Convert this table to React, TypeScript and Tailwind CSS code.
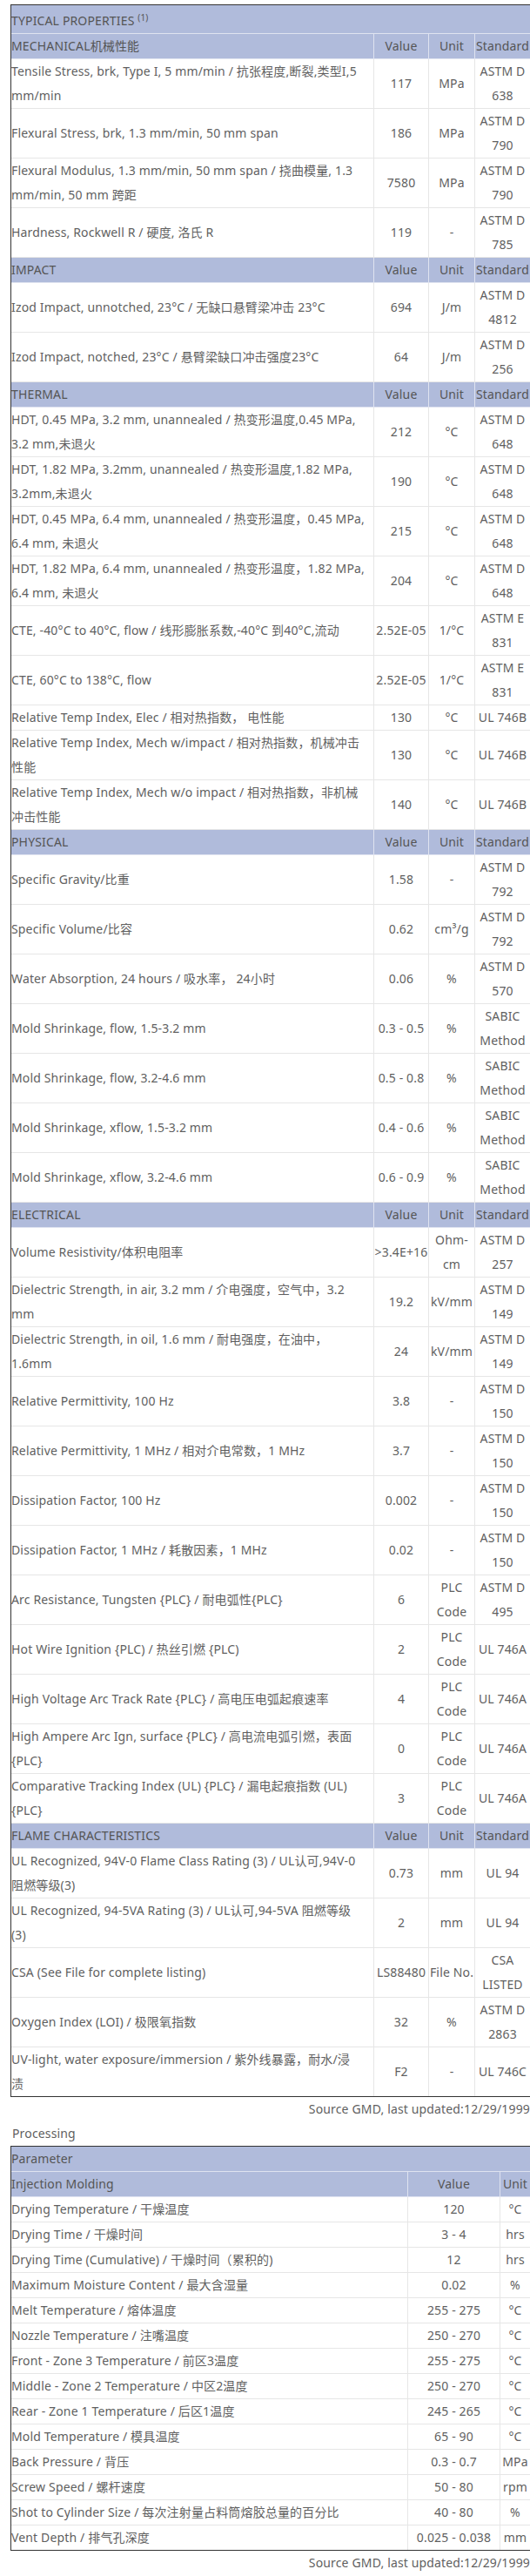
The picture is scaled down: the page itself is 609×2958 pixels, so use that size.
import React from 'react';

interface PropRow {
    name: string;
    value: string;
    unit: string;
    std: string;
}

interface Section {
    title: string;
    rows: PropRow[];
}

interface ProcRow {
    name: string;
    value: string;
    unit: string;
}

const sections: Section[] = [
    {
        title: 'MECHANICAL机械性能',
        rows: [
            { name: 'Tensile Stress, brk, Type I, 5 mm/min / 抗张程度,断裂,类型I,5\nmm/min', value: '117', unit: 'MPa', std: 'ASTM D\n638' },
            { name: 'Flexural Stress, brk, 1.3 mm/min, 50 mm span', value: '186', unit: 'MPa', std: 'ASTM D\n790' },
            { name: 'Flexural Modulus, 1.3 mm/min, 50 mm span / 挠曲模量, 1.3\nmm/min, 50 mm 跨距', value: '7580', unit: 'MPa', std: 'ASTM D\n790' },
            { name: 'Hardness, Rockwell R / 硬度, 洛氏 R', value: '119', unit: '-', std: 'ASTM D\n785' },
        ],
    },
    {
        title: 'IMPACT',
        rows: [
            { name: 'Izod Impact, unnotched, 23°C / 无缺口悬臂梁冲击 23°C', value: '694', unit: 'J/m', std: 'ASTM D\n4812' },
            { name: 'Izod Impact, notched, 23°C / 悬臂梁缺口冲击强度23°C', value: '64', unit: 'J/m', std: 'ASTM D\n256' },
        ],
    },
    {
        title: 'THERMAL',
        rows: [
            { name: 'HDT, 0.45 MPa, 3.2 mm, unannealed / 热变形温度,0.45 MPa,\n3.2 mm,未退火', value: '212', unit: '°C', std: 'ASTM D\n648' },
            { name: 'HDT, 1.82 MPa, 3.2mm, unannealed / 热变形温度,1.82 MPa,\n3.2mm,未退火', value: '190', unit: '°C', std: 'ASTM D\n648' },
            { name: 'HDT, 0.45 MPa, 6.4 mm, unannealed / 热变形温度，0.45 MPa,\n6.4 mm, 未退火', value: '215', unit: '°C', std: 'ASTM D\n648' },
            { name: 'HDT, 1.82 MPa, 6.4 mm, unannealed / 热变形温度，1.82 MPa,\n6.4 mm, 未退火', value: '204', unit: '°C', std: 'ASTM D\n648' },
            { name: 'CTE, -40°C to 40°C, flow / 线形膨胀系数,-40°C 到40°C,流动', value: '2.52E-05', unit: '1/°C', std: 'ASTM E\n831' },
            { name: 'CTE, 60°C to 138°C, flow', value: '2.52E-05', unit: '1/°C', std: 'ASTM E\n831' },
            { name: 'Relative Temp Index, Elec / 相对热指数， 电性能', value: '130', unit: '°C', std: 'UL 746B' },
            { name: 'Relative Temp Index, Mech w/impact / 相对热指数，机械冲击\n性能', value: '130', unit: '°C', std: 'UL 746B' },
            { name: 'Relative Temp Index, Mech w/o impact / 相对热指数，非机械\n冲击性能', value: '140', unit: '°C', std: 'UL 746B' },
        ],
    },
    {
        title: 'PHYSICAL',
        rows: [
            { name: 'Specific Gravity/比重', value: '1.58', unit: '-', std: 'ASTM D\n792' },
            { name: 'Specific Volume/比容', value: '0.62', unit: 'cm³/g', std: 'ASTM D\n792' },
            { name: 'Water Absorption, 24 hours / 吸水率， 24小时', value: '0.06', unit: '%', std: 'ASTM D\n570' },
            { name: 'Mold Shrinkage, flow, 1.5-3.2 mm', value: '0.3 - 0.5', unit: '%', std: 'SABIC\nMethod' },
            { name: 'Mold Shrinkage, flow, 3.2-4.6 mm', value: '0.5 - 0.8', unit: '%', std: 'SABIC\nMethod' },
            { name: 'Mold Shrinkage, xflow, 1.5-3.2 mm', value: '0.4 - 0.6', unit: '%', std: 'SABIC\nMethod' },
            { name: 'Mold Shrinkage, xflow, 3.2-4.6 mm', value: '0.6 - 0.9', unit: '%', std: 'SABIC\nMethod' },
        ],
    },
    {
        title: 'ELECTRICAL',
        rows: [
            { name: 'Volume Resistivity/体积电阻率', value: '>3.4E+16', unit: 'Ohm-\ncm', std: 'ASTM D\n257' },
            { name: 'Dielectric Strength, in air, 3.2 mm / 介电强度，空气中，3.2\nmm', value: '19.2', unit: 'kV/mm', std: 'ASTM D\n149' },
            { name: 'Dielectric Strength, in oil, 1.6 mm / 耐电强度，在油中，\n1.6mm', value: '24', unit: 'kV/mm', std: 'ASTM D\n149' },
            { name: 'Relative Permittivity, 100 Hz', value: '3.8', unit: '-', std: 'ASTM D\n150' },
            { name: 'Relative Permittivity, 1 MHz / 相对介电常数，1 MHz', value: '3.7', unit: '-', std: 'ASTM D\n150' },
            { name: 'Dissipation Factor, 100 Hz', value: '0.002', unit: '-', std: 'ASTM D\n150' },
            { name: 'Dissipation Factor, 1 MHz / 耗散因素，1 MHz', value: '0.02', unit: '-', std: 'ASTM D\n150' },
            { name: 'Arc Resistance, Tungsten {PLC} / 耐电弧性{PLC}', value: '6', unit: 'PLC\nCode', std: 'ASTM D\n495' },
            { name: 'Hot Wire Ignition {PLC) / 热丝引燃 {PLC)', value: '2', unit: 'PLC\nCode', std: 'UL 746A' },
            { name: 'High Voltage Arc Track Rate {PLC} / 高电压电弧起痕速率', value: '4', unit: 'PLC\nCode', std: 'UL 746A' },
            { name: 'High Ampere Arc Ign, surface {PLC} / 高电流电弧引燃，表面\n{PLC}', value: '0', unit: 'PLC\nCode', std: 'UL 746A' },
            { name: 'Comparative Tracking Index (UL) {PLC} / 漏电起痕指数 (UL)\n{PLC}', value: '3', unit: 'PLC\nCode', std: 'UL 746A' },
        ],
    },
    {
        title: 'FLAME CHARACTERISTICS',
        rows: [
            { name: 'UL Recognized, 94V-0 Flame Class Rating (3) / UL认可,94V-0\n阻燃等级(3)', value: '0.73', unit: 'mm', std: 'UL 94' },
            { name: 'UL Recognized, 94-5VA Rating (3) / UL认可,94-5VA 阻燃等级\n(3)', value: '2', unit: 'mm', std: 'UL 94' },
            { name: 'CSA (See File for complete listing)', value: 'LS88480', unit: 'File No.', std: 'CSA\nLISTED' },
            { name: 'Oxygen Index (LOI) / 极限氧指数', value: '32', unit: '%', std: 'ASTM D\n2863' },
            { name: 'UV-light, water exposure/immersion / 紫外线暴露，耐水/浸\n渍', value: 'F2', unit: '-', std: 'UL 746C' },
        ],
    },
];

const processing: ProcRow[] = [
    { name: 'Drying Temperature / 干燥温度', value: '120', unit: '°C' },
    { name: 'Drying Time / 干燥时间', value: '3 - 4', unit: 'hrs' },
    { name: 'Drying Time (Cumulative) / 干燥时间（累积的)', value: '12', unit: 'hrs' },
    { name: 'Maximum Moisture Content / 最大含湿量', value: '0.02', unit: '%' },
    { name: 'Melt Temperature / 熔体温度', value: '255 - 275', unit: '°C' },
    { name: 'Nozzle Temperature / 注嘴温度', value: '250 - 270', unit: '°C' },
    { name: 'Front - Zone 3 Temperature / 前区3温度', value: '255 - 275', unit: '°C' },
    { name: 'Middle - Zone 2 Temperature / 中区2温度', value: '250 - 270', unit: '°C' },
    { name: 'Rear - Zone 1 Temperature / 后区1温度', value: '245 - 265', unit: '°C' },
    { name: 'Mold Temperature / 模具温度', value: '65 - 90', unit: '°C' },
    { name: 'Back Pressure / 背压', value: '0.3 - 0.7', unit: 'MPa' },
    { name: 'Screw Speed / 螺杆速度', value: '50 - 80', unit: 'rpm' },
    { name: 'Shot to Cylinder Size / 每次注射量占料筒熔胶总量的百分比', value: '40 - 80', unit: '%' },
    { name: 'Vent Depth / 排气孔深度', value: '0.025 - 0.038', unit: 'mm' },
];

const SectionHeader: React.FC<{ title: string }> = ({ title }) => (
    <div className="grid grid-cols-[417px_63px_53px_63px] border-b border-[#dfe3f0] bg-[#b0bbdb] text-[#555]">
        <div className="border-r border-[#dfe3f0]">{title}</div>
        <div className="border-r border-[#dfe3f0] text-center">Value</div>
        <div className="border-r border-[#dfe3f0] text-center">Unit</div>
        <div className="text-center">Standard</div>
    </div>
);

const DataRow: React.FC<{ row: PropRow; last: boolean }> = ({ row, last }) => (
    <div className={`grid grid-cols-[417px_63px_53px_63px] ${last ? '' : 'border-b border-[#e6e6e6]'}`}>
        <div className="flex items-center whitespace-pre-line border-r border-[#e6e6e6]">{row.name}</div>
        <div className="flex items-center justify-center whitespace-nowrap border-r border-[#e6e6e6]">{row.value}</div>
        <div className="flex items-center justify-center whitespace-pre-line border-r border-[#e6e6e6] text-center">{row.unit}</div>
        <div className="flex items-center justify-center whitespace-pre-line text-center">{row.std}</div>
    </div>
);

const App: React.FC = () => {
    return (
        <div className="w-[609px] overflow-hidden bg-white pt-[5px] font-['Noto_Sans','Noto_Sans_CJK_SC',sans-serif] text-[14px] leading-[28px] tracking-[0.15px] text-[#5f5f5f]">
            <div className="ml-3 w-[598px]">
                {/* Typical properties */}
                <div className="border border-[#333]">
                    <div className="h-[33px] border-b border-[#dfe3f0] bg-[#b0bbdb] pt-[4px] text-[#555]">
                        TYPICAL PROPERTIES <sup className="text-[10px] leading-none">(1)</sup>
                    </div>
                    {sections.map((section, si) => (
                        <div key={section.title}>
                            <SectionHeader title={section.title} />
                            {section.rows.map((row, ri) => (
                                <DataRow
                                    key={ri}
                                    row={row}
                                    last={si === sections.length - 1 && ri === section.rows.length - 1}
                                />
                            ))}
                        </div>
                    ))}
                </div>
                <p className="pr-px text-right">Source GMD, last updated:12/29/1999</p>

                {/* Processing */}
                <p className="pl-[2px]">Processing</p>
                <div className="border border-[#333]">
                    <div className="border-b border-[#dfe3f0] bg-[#b0bbdb] text-[#555]">Parameter</div>
                    <div className="grid grid-cols-[456px_106px_34px] border-b border-[#dfe3f0] bg-[#b0bbdb] text-[#555]">
                        <div className="border-r border-[#dfe3f0]">Injection Molding</div>
                        <div className="border-r border-[#dfe3f0] text-center">Value</div>
                        <div className="text-center">Unit</div>
                    </div>
                    {processing.map((row, i) => (
                        <div
                            key={i}
                            className={`grid grid-cols-[456px_106px_34px] ${i === processing.length - 1 ? '' : 'border-b border-[#e6e6e6]'}`}
                        >
                            <div className="whitespace-nowrap border-r border-[#e6e6e6]">{row.name}</div>
                            <div className="whitespace-nowrap border-r border-[#e6e6e6] text-center">{row.value}</div>
                            <div className="whitespace-nowrap text-center">{row.unit}</div>
                        </div>
                    ))}
                </div>
                <p className="pr-px text-right">Source GMD, last updated:12/29/1999</p>
            </div>
        </div>
    );
};

export default App;
